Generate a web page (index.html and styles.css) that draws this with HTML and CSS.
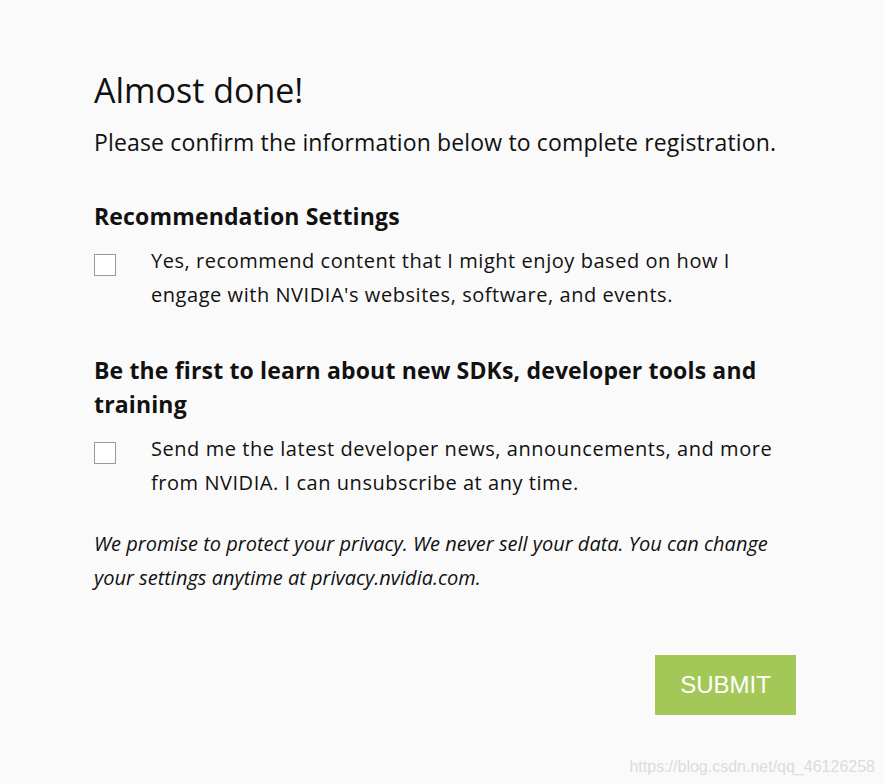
FILE: index.html
```html
<!DOCTYPE html>
<html lang="en">
<head>
<meta charset="utf-8">
<title>Almost done!</title>
<link rel="stylesheet" href="styles.css">
</head>
<body>
<main class="page">
  <h1 class="title">Almost done!</h1>
  <p class="lead">Please confirm the information below to complete registration.</p>

  <section class="group">
    <h2 class="group-title">Recommendation Settings</h2>
    <label class="option">
      <span class="box"></span>
      <span class="option-text">Yes, recommend content that I might enjoy based on how I engage with NVIDIA's websites, software, and events.</span>
    </label>
  </section>

  <section class="group">
    <h2 class="group-title">Be the first to learn about new SDKs, developer tools and training</h2>
    <label class="option">
      <span class="box"></span>
      <span class="option-text">Send me the latest developer news, announcements, and more from NVIDIA. I can unsubscribe at any time.</span>
    </label>
  </section>

  <p class="privacy">We promise to protect your privacy. We never sell your data. You can change your settings anytime at privacy.nvidia.com.</p>

  <div class="actions">
    <button class="submit" type="button">SUBMIT</button>
  </div>
</main>
<div class="watermark">https://blog.csdn.net/qq_46126258</div>
</body>
</html>
```

FILE: styles.css
```css
html, body {
  margin: 0;
  padding: 0;
  background: #fafafa;
}
body {
  font-family: "Open Sans", "Noto Sans", sans-serif;
  color: #111;
  width: 884px;
  height: 784px;
  position: relative;
  overflow: hidden;
}
.page {
  width: 702px;
  padding: 64px 0 0 94px;
}
.title {
  margin: 0;
  font-size: 34px;
  font-weight: 400;
  line-height: 52px;
}
.lead {
  margin: 9px 0 0;
  font-size: 23px;
  line-height: 34px;
  letter-spacing: 0.15px;
}
.group {
  margin-top: 40px;
}
.group + .group {
  margin-top: 41px;
}
.group-title {
  margin: 0;
  font-size: 23px;
  font-weight: 700;
  line-height: 34px;
  letter-spacing: 0.15px;
}
.option {
  display: flex;
  align-items: flex-start;
  margin-top: 11px;
}
.box {
  flex: none;
  width: 20px;
  height: 20px;
  border: 1px solid #9a9a9a;
  background: #fff;
  margin-top: 10px;
  margin-right: 35px;
}
.option-text {
  max-width: 640px;
  font-size: 20px;
  line-height: 34px;
  letter-spacing: 0.55px;
}
.privacy {
  margin: 27px 0 0;
  font-size: 20px;
  line-height: 34px;
  font-style: italic;
}
.actions {
  display: flex;
  justify-content: flex-end;
  margin-top: 60px;
}
.submit {
  width: 141px;
  height: 60px;
  border: 0;
  background: #a4c857;
  color: #fff;
  font-family: "Liberation Sans", Arial, sans-serif;
  font-size: 24px;
}
.watermark {
  position: absolute;
  right: 9px;
  bottom: 8px;
  font-family: "Liberation Sans", Arial, sans-serif;
  font-size: 16px;
  color: #dcdcdc;
}
```
